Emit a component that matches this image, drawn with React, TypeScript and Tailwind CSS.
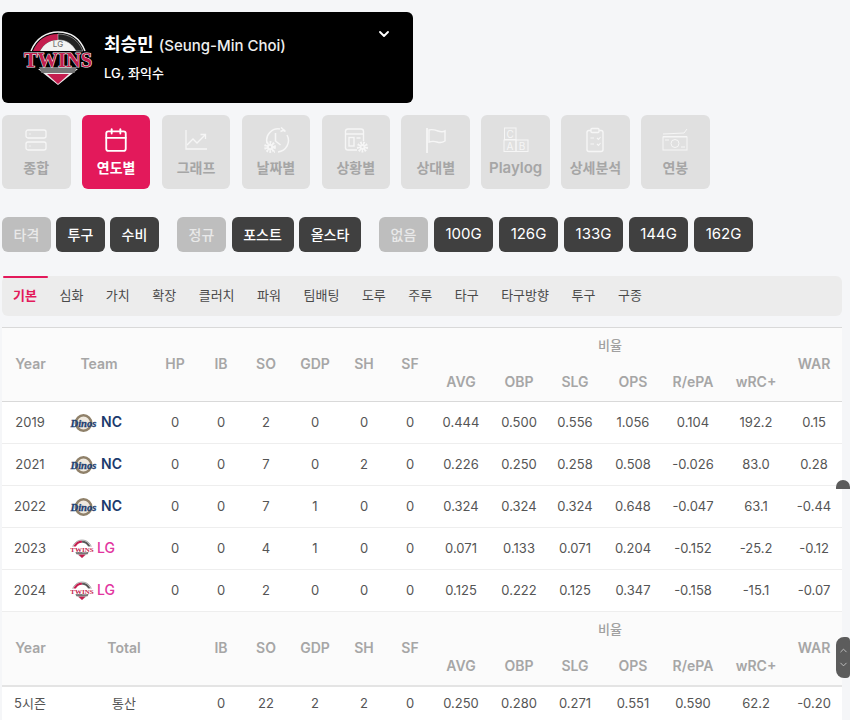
import { Calendar, ChevronDown, ChevronUp, Server } from "lucide-react";
import type { ReactNode } from "react";

const FONT = "[font-family:Inter,'Noto_Sans_CJK_KR',sans-serif]";

const Gear = ({ x, y, r }: { x: number; y: number; r: number }) => (
  <g>
    <circle cx={x} cy={y} r={r} fill="none" stroke="currentColor" strokeWidth={r * 0.8} strokeDasharray="1.6 1.1" />
    <circle cx={x} cy={y} r={r * 0.75} fill="currentColor" />
    <circle cx={x} cy={y} r={r * 0.28} fill="#e0e0e0" />
  </g>
);

const ChartIcon = () => (
  <svg width="24" height="24" viewBox="0 0 24 24" fill="none" stroke="currentColor" strokeWidth="1.3">
    <path d="M2 2v19h21" />
    <path d="M3 17l6-6 4 4 8-8M16.5 6.5H21.5V11" />
  </svg>
);

const ClockGearIcon = () => (
  <svg width="28" height="28" viewBox="0 0 28 28" fill="none" stroke="currentColor" strokeWidth="1.5">
    <path d="M5 17A11.5 11.5 0 0 1 18 3M21 4l2.500 1.500M25 9a11.500 11.500 0 0 1-9 17M12 26h1" />
    <path d="M13.500 7v8l5 4" />
    <path d="M19 1.500l3 2.500-3.500 1.500" />
    <g stroke="none"><Gear x={8} y={21} r={4.2} /></g>
  </svg>
);

const WindowGearIcon = () => (
  <svg width="26" height="26" viewBox="0 0 26 26" fill="none" stroke="currentColor" strokeWidth="1.4">
    <path d="M14 23H5a2.500 2.500 0 0 1-2.500-2.500v-16A2.500 2.500 0 0 1 5 2h13a2.500 2.500 0 0 1 2.500 2.500V14" />
    <path d="M2.500 7h18" />
    <rect x="6" y="10.500" width="5" height="8.500" />
    <path d="M13.500 11h4" />
    <g stroke="none"><Gear x={19.500} y={20} r={4} /></g>
  </svg>
);

const FlagIcon = () => (
  <svg width="26" height="26" viewBox="0 0 26 26" fill="none" stroke="currentColor" strokeWidth="1.4">
    <path d="M4 1v25" strokeWidth="1.800" />
    <path d="M6 3c3-1 6 0 9 1s5 1 7 0v10c-3 2-5 2-8 1s-5-1-8 0z" />
  </svg>
);

const BlocksIcon = () => (
  <svg width="26" height="26" viewBox="0 0 26 26" fill="none" stroke="currentColor" strokeWidth="1">
    <rect x="1.500" y="1" width="11.500" height="11.500" />
    <rect x="1" y="13" width="12" height="11.500" />
    <rect x="13" y="13" width="12" height="11.500" />
    <g fill="currentColor" stroke="none" fontSize="10" fontFamily="Inter" textAnchor="middle">
      <text x="7.200" y="10.500">C</text>
      <text x="7" y="22.500">A</text>
      <text x="19" y="22.500">B</text>
    </g>
  </svg>
);

const ClipboardIcon = () => (
  <svg width="26" height="26" viewBox="0 0 26 26" fill="none" stroke="currentColor" strokeWidth="1.400">
    <rect x="5" y="3.500" width="16" height="21" rx="2" />
    <rect x="9" y="1.500" width="8" height="4" rx="1" fill="#e0e0e0" />
    <path d="M8.500 11h3.500M15 11l1.500 1.500 2-2.500M8.500 17h3.500M15 17l1.500 1.500 2-2.500" strokeWidth="1.100" />
  </svg>
);

const MoneyIcon = () => (
  <svg width="26" height="26" viewBox="0 0 26 26" fill="none" stroke="currentColor" strokeWidth="1">
    <path d="M1 7l21-1 3-4M1 9.500h24" />
    <rect x="1" y="10" width="24" height="13" />
    <circle cx="13" cy="16.500" r="4" />
    <path d="M3 13h4M19 20h4" />
  </svg>
);

const navTabs: { label: string; icon: ReactNode; active?: boolean }[] = [
  { label: "종합", icon: <Server size={24} strokeWidth={1.3} /> },
  { label: "연도별", icon: <Calendar size={26} strokeWidth={1.7} />, active: true },
  { label: "그래프", icon: <ChartIcon /> },
  { label: "날짜별", icon: <ClockGearIcon /> },
  { label: "상황별", icon: <WindowGearIcon /> },
  { label: "상대별", icon: <FlagIcon /> },
  { label: "Playlog", icon: <BlocksIcon /> },
  { label: "상세분석", icon: <ClipboardIcon /> },
  { label: "연봉", icon: <MoneyIcon /> },
];

const filterGroups = [
  { gap: "gap-[5px]", items: ["타격", "투구", "수비"] },
  { gap: "gap-[5.5px]", items: ["정규", "포스트", "올스타"] },
  { gap: "gap-[6px]", items: ["없음", "100G", "126G", "133G", "144G", "162G"] },
];

const subTabs = ["기본", "심화", "가치", "확장", "클러치", "파워", "팀배팅", "도루", "주루", "타구", "타구방향", "투구", "구종"];

const colWidths = [
  "w-[56px]", "w-[94px]", "w-[46px]", "w-[46px]", "w-[44px]", "w-[54px]", "w-[44px]", "w-[48px]",
  "w-[54px]", "w-[62px]", "w-[50px]", "w-[66px]", "w-[60px]", "w-[60px]", "w-[56px]",
];

const rows = [
  { year: "2019", team: "NC", nums: ["0", "0", "2", "0", "0", "0", "0.444", "0.500", "0.556", "1.056", "0.104", "192.2", "0.15"] },
  { year: "2021", team: "NC", nums: ["0", "0", "7", "0", "2", "0", "0.226", "0.250", "0.258", "0.508", "-0.026", "83.0", "0.28"] },
  { year: "2022", team: "NC", nums: ["0", "0", "7", "1", "0", "0", "0.324", "0.324", "0.324", "0.648", "-0.047", "63.1", "-0.44"] },
  { year: "2023", team: "LG", nums: ["0", "0", "4", "1", "0", "0", "0.071", "0.133", "0.071", "0.204", "-0.152", "-25.2", "-0.12"] },
  { year: "2024", team: "LG", nums: ["0", "0", "2", "0", "0", "0", "0.125", "0.222", "0.125", "0.347", "-0.158", "-15.1", "-0.07"] },
];

const totals = ["0", "22", "2", "2", "0", "0.250", "0.280", "0.271", "0.551", "0.590", "62.2", "-0.20"];

const TwinsLogo = ({ size }: { size: "lg" | "sm" }) => (
  <svg
    viewBox="0 0 70 56"
    className={size === "lg" ? "w-[70px] h-[56px]" : "w-[24px] h-[20px]"}
  >
    <path d="M8 21C13 8 24 2 35 2c12 0 22 6 27 19" fill="none" stroke={size === "lg" ? "#f2f2f2" : "#555"} strokeWidth="1.500" />
    <path d="M10 21C15 9 24 4 35 4v6c-9 0-14 4-18 11z" fill="#c41e4f" />
    <path d="M35 4c11 0 20 5 25 17h-7c-4-7-9-11-18-11z" fill={size === "lg" ? "#222" : "#555"} stroke="#eee" strokeWidth="0.500" />
    {size === "lg" && <path d="M17 21c4-7 9-11 18-11s14 4 18 11z" fill="#f3f3f3" />}
    {size === "lg" && (
      <text x="35" y="17" textAnchor="middle" fontSize="8" fontFamily="Inter" fill="#777" fontWeight="500">LG</text>
    )}
    <path d="M15 39h40L35 55z" fill={size === "lg" ? "#eee" : "#ddd"} />
    <path d="M24 44h22L35 54z" fill="#c41e4f" />
    <path d="M16 37h38l-2.500 6h-33z" fill="#777" />
    <text
      x="35"
      y="37"
      textAnchor="middle"
      fontSize="20"
      fontFamily="Liberation Serif"
      fontWeight="700"
      textLength="68"
      lengthAdjust="spacingAndGlyphs"
      fill="#c41e4f"
      stroke={size === "lg" ? "#f4f4f4" : "#fff"}
      strokeWidth="1"
      paintOrder="stroke"
    >
      TWINS
    </text>
  </svg>
);

const DinosLogo = () => (
  <svg viewBox="0 0 28 20" className="w-[27px] h-[20px]">
    <circle cx="14" cy="10" r="8" fill="#efe9df" stroke="#8f8069" strokeWidth="2.600" />
    <text
      x="14"
      y="14"
      textAnchor="middle"
      fontSize="11"
      fontFamily="Liberation Serif"
      fontStyle="italic"
      fontWeight="700"
      textLength="27"
      lengthAdjust="spacingAndGlyphs"
      fill="#1e3f72"
      stroke="#1e3f72"
      strokeWidth="0.300"
    >
      Dinos
    </text>
  </svg>
);

const filterWidth = (label: string) => {
  if (label.endsWith("G")) return "w-[59px] text-[15px] font-normal";
  if (label.length === 3) return "w-[62px] text-[14px] font-medium";
  return "w-[49px] text-[14px] font-medium";
};

const App = () => {
  return (
    <div className={`w-[850px] h-[720px] overflow-hidden bg-[#f5f6f8] relative ${FONT}`}>
      <div className="pt-3 pl-0.5 flex flex-col">
        {/* player card */}
        <div className="w-[411px] h-[91px] bg-black rounded-md flex items-start relative pl-[21px] pt-[18px]">
          <TwinsLogo size="lg" />
          <div className="ml-[11px] text-white">
            <div className="flex items-baseline gap-[5px] mt-[3px] leading-6">
              <span className="text-[18px] font-semibold">최승민</span>
              <span className="text-[15px] font-medium text-[#eee]">(Seung-Min Choi)</span>
            </div>
            <div className="text-[13px] font-medium mt-[7px] leading-4">LG, 좌익수</div>
          </div>
          <ChevronDown size={16} strokeWidth={2.8} className="absolute right-[21px] top-[14px] text-white" />
        </div>

        {/* main nav */}
        <div className="flex gap-[11.4px] mt-3">
          {navTabs.map(({ label, icon, active }) => (
            <div
              key={label}
              className={`w-[68.5px] h-[74px] rounded-md flex flex-col items-center ${
                active ? "bg-[#e3195b] text-white" : "bg-[#e0e0e0] text-[#f6f6f6]"
              }`}
            >
              <div className="h-[28px] mt-[11px] flex items-center justify-center">{icon}</div>
              <span
                className={`mt-[4px] font-semibold leading-5 ${label === "Playlog" ? "text-[15px]" : "text-[14px]"} ${
                  active ? "text-white" : "text-[#a6a6a6]"
                }`}
              >
                {label}
              </span>
            </div>
          ))}
        </div>

        {/* filters */}
        <div className="flex gap-[18px] mt-7">
          {filterGroups.map(({ gap, items }) => (
            <div key={items[0]} className={`flex ${gap}`}>
              {items.map((label, i) => (
                <div
                  key={label}
                  className={`h-[35px] rounded-md flex items-center justify-center ${filterWidth(label)} ${
                    i === 0 ? "bg-[#bebebe] text-[#e9e9e9]" : "bg-[#404040] text-white"
                  }`}
                >
                  {label}
                </div>
              ))}
            </div>
          ))}
        </div>

        {/* sub tabs */}
        <div className="w-[840px] h-[40px] mt-6 bg-[#ececec] rounded-md flex gap-[0.5px] relative">
          {subTabs.map((label, i) => (
            <div
              key={i}
              className={`h-full px-[11px] flex items-center text-[13px] relative ${
                i === 0 ? "text-[#e3195b] font-bold" : "text-[#4a4a4a]"
              }`}
            >
              {i === 0 && <span className="absolute top-0 left-[1px] right-0 h-[2px] bg-[#e3195b] rounded-full" />}
              {label}
            </div>
          ))}
        </div>

        {/* stats table */}
        <table className="table-fixed w-[840px] mt-[11px] border-collapse text-[13px] text-[#555]">
          <colgroup>
            {colWidths.map((w, i) => (
              <col key={i} className={w} />
            ))}
          </colgroup>
          <thead className="bg-[#fbfbfb] text-[14px] font-semibold text-[#a6a6a6]">
            <tr className="h-[36px] border-t border-[#d9d9d9]">
              <th rowSpan={2} className="font-semibold pl-[1px] pb-[2px]">Year</th>
              <th rowSpan={2} className="font-semibold pr-[12px] pb-[2px]">Team</th>
              {["HP", "IB", "SO", "GDP", "SH", "SF"].map((h) => (
                <th key={h} rowSpan={2} className="font-semibold pb-[2px]">{h}</th>
              ))}
              <th colSpan={6} className="font-medium text-[13px] text-[#a0a0a0] align-middle">비율</th>
              <th rowSpan={2} className="font-semibold pb-[2px]">WAR</th>
            </tr>
            <tr className="h-[38px]">
              {["AVG", "OBP", "SLG", "OPS"].map((h) => (
                <th key={h} className="font-semibold pb-[2px]">{h}</th>
              ))}
              <th className="font-semibold pr-[6px] pb-[2px]">R/ePA</th>
              <th className="font-semibold pb-[2px]">wRC+</th>
            </tr>
          </thead>
          <tbody className="bg-white">
            {rows.map(({ year, team, nums }) => (
              <tr key={year} className="h-[42px] border-t border-[#eeeeee] first:border-[#d9d9d9]">
                <td className="text-center">{year}</td>
                <td>
                  <div className="flex items-center pl-[12px]">
                    {team === "NC" ? <DinosLogo /> : <TwinsLogo size="sm" />}
                    <span
                      className={`text-[14px] -mt-[2px] ${
                        team === "NC"
                          ? "ml-[4px] font-semibold text-[#1b3a6d]"
                          : "ml-[3px] font-medium text-[#e2369f]"
                      }`}
                    >
                      {team}
                    </span>
                  </div>
                </td>
                {nums.map((n, i) => (
                  <td key={i} className={`text-center ${i === 10 ? "pr-[6px]" : ""}`}>
                    {n}
                  </td>
                ))}
              </tr>
            ))}
          </tbody>
          <thead className="bg-[#fbfbfb] text-[14px] font-semibold text-[#a6a6a6]">
            <tr className="h-[36px] border-t border-[#eeeeee]">
              <th rowSpan={2} className="font-semibold pl-[1px] pb-[2px]">Year</th>
              <th rowSpan={2} colSpan={2} className="font-semibold pr-[8px] pb-[2px]">Total</th>
              {["IB", "SO", "GDP", "SH", "SF"].map((h) => (
                <th key={h} rowSpan={2} className="font-semibold pb-[2px]">{h}</th>
              ))}
              <th colSpan={6} className="font-medium text-[13px] text-[#a0a0a0]">비율</th>
              <th rowSpan={2} className="font-semibold pb-[2px]">WAR</th>
            </tr>
            <tr className="h-[38px]">
              {["AVG", "OBP", "SLG", "OPS"].map((h) => (
                <th key={h} className="font-semibold pb-[2px]">{h}</th>
              ))}
              <th className="font-semibold pr-[6px] pb-[2px]">R/ePA</th>
              <th className="font-semibold pb-[2px]">wRC+</th>
            </tr>
          </thead>
          <tbody className="bg-white">
            <tr className="h-[36px] border-t-2 border-[#e4e4e4]">
              <td className="text-center">5시즌</td>
              <td colSpan={2} className="text-center pr-[8px]">통산</td>
              {totals.map((n, i) => (
                <td key={i} className={`text-center ${i === 9 ? "pr-[6px]" : ""}`}>
                  {n}
                </td>
              ))}
            </tr>
          </tbody>
        </table>
      </div>

      {/* floating scroll controls */}
      <div className="absolute right-0 top-[480px] w-[14px] h-[9px] rounded-t-full bg-[#5c5c5c]" />
      <div className="absolute right-0 top-[637px] w-[14px] h-[41px] rounded-l-lg rounded-r-sm bg-[#5c5c5c] flex flex-col items-center justify-center gap-[3px] text-[#cfcfcf]">
        <ChevronUp size={11} strokeWidth={1.8} />
        <ChevronDown size={11} strokeWidth={1.8} />
      </div>
    </div>
  );
};

export default App;
